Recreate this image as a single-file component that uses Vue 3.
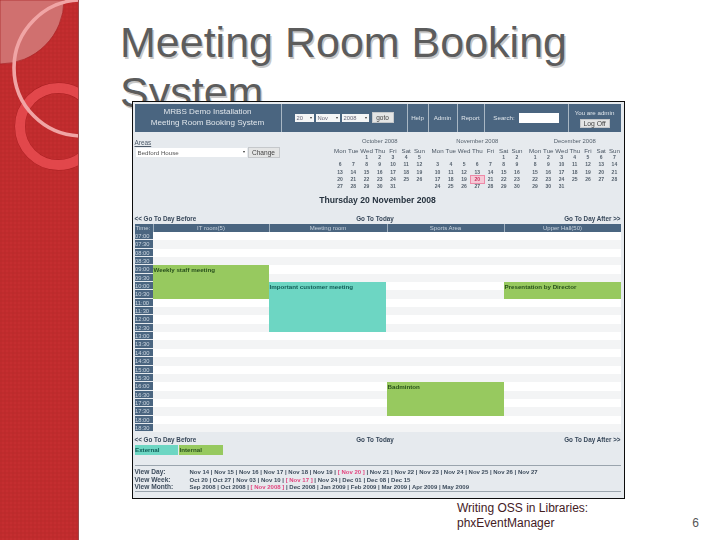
<script setup>
const months = [
  { name: 'October 2008', blank: 2, days: 31 },
  { name: 'November 2008', blank: 5, days: 30, today: 20 },
  { name: 'December 2008', blank: 0, days: 31 },
]
const dow = ['Mon', 'Tue', 'Wed', 'Thu', 'Fri', 'Sat', 'Sun']
function cells(m) {
  const out = []
  for (let i = 0; i < m.blank; i++) out.push('')
  for (let d = 1; d <= m.days; d++) out.push(d)
  return out
}
const rooms = ['IT room(5)', 'Meeting room', 'Sports Area', 'Upper Hall(50)']
const times = []
for (let h = 7; h <= 18; h++) {
  const hh = String(h).padStart(2, '0')
  times.push(hh + ':00', hh + ':30')
}
const viewRows = [
  { label: 'View Day:', items: ['Nov 14', 'Nov 15', 'Nov 16', 'Nov 17', 'Nov 18', 'Nov 19', '[ Nov 20 ]', 'Nov 21', 'Nov 22', 'Nov 23', 'Nov 24', 'Nov 25', 'Nov 26', 'Nov 27'] },
  { label: 'View Week:', items: ['Oct 20', 'Oct 27', 'Nov 03', 'Nov 10', '[ Nov 17 ]', 'Nov 24', 'Dec 01', 'Dec 08', 'Dec 15'] },
  { label: 'View Month:', items: ['Sep 2008', 'Oct 2008', '[ Nov 2008 ]', 'Dec 2008', 'Jan 2009', 'Feb 2009', 'Mar 2009', 'Apr 2009', 'May 2009'] },
]
</script>

<template>
  <div class="slide">
    <aside class="rail">
      <svg class="art" width="79" height="540" viewBox="0 0 79 540">
        <defs>
          <pattern id="weave" width="4" height="4" patternUnits="userSpaceOnUse">
            <rect width="4" height="4" fill="#c02b2d" />
            <rect width="2" height="2" fill="#bc2b2c" />
            <rect x="2" y="2" width="2" height="2" fill="#c42e30" />
          </pattern>
        </defs>
        <rect width="79" height="540" fill="url(#weave)" />
        <path d="M0 0H64A64 64 0 0 1 0 64Z" fill="#d0706f" stroke="#a81f22" stroke-width="0.7" />
        <circle cx="58.5" cy="126.5" r="38.5" fill="none" stroke="#a81f22" stroke-width="10.8" />
        <circle cx="58.5" cy="126.5" r="38.5" fill="none" stroke="#e2474b" stroke-width="10" />
        <circle cx="82" cy="68" r="68" fill="none" stroke="#f0a5a5" stroke-width="3.6" />
        <rect x="78" width="1" height="540" fill="#9c4a4c" />
      </svg>
    </aside>

    <main class="content">
      <h1 class="title">Meeting Room Booking System</h1>
      <footer class="foot">
        <p class="foot-text">Writing OSS in Libraries:<br />phxEventManager</p>
        <span class="page">6</span>
      </footer>
    </main>

    <section class="shot">
      <header class="bar">
        <div class="brand">MRBS Demo Installation<br />Meeting Room Booking System</div>
        <div class="cell dates">
          <span class="sel s1">20 <i></i></span>
          <span class="sel s2">Nov <i></i></span>
          <span class="sel s3">2008 <i></i></span>
          <span class="btn go">goto</span>
        </div>
        <div class="cell">Help</div>
        <div class="cell">Admin</div>
        <div class="cell">Report</div>
        <div class="cell search">Search: <span class="input"></span></div>
        <div class="cell user">
          <span>You are admin</span>
          <span class="btn logoff">Log Off</span>
        </div>
      </header>

      <div class="top">
        <div class="areas">
          <div class="areas-label">Areas</div>
          <div class="areas-row">
            <span class="area-select">Bedford House <i></i></span>
            <span class="btn change">Change</span>
          </div>
        </div>
        <div class="cals">
          <div v-for="m in months" :key="m.name" class="cal">
            <div class="cal-name">{{ m.name }}</div>
            <div class="cal-grid">
              <span v-for="d in dow" :key="d" class="dow">{{ d }}</span>
              <span
                v-for="(c, i) in cells(m)"
                :key="i"
                class="day"
                :class="{ today: c === m.today }"
              >{{ c }}</span>
            </div>
          </div>
        </div>
      </div>

      <h2 class="date">Thursday 20 November 2008</h2>

      <nav class="nav first">
        <span>&lt;&lt; Go To Day Before</span>
        <span>Go To Today</span>
        <span>Go To Day After &gt;&gt;</span>
      </nav>

      <div class="sched">
        <div class="hd hd-time">Time:</div>
        <div v-for="r in rooms" :key="r" class="hd">{{ r }}</div>
        <template v-for="(t, i) in times" :key="t">
          <div class="time" :class="'r' + i">{{ t }}</div>
          <div class="stripe" :class="['r' + i, i % 2 ? 'odd' : 'even']"></div>
        </template>
        <div class="ev internal weekly">Weekly staff meeting</div>
        <div class="ev external important">Important customer meeting</div>
        <div class="ev internal badminton">Badminton</div>
        <div class="ev internal presentation">Presentation by Director</div>
      </div>

      <nav class="nav second">
        <span>&lt;&lt; Go To Day Before</span>
        <span>Go To Today</span>
        <span>Go To Day After &gt;&gt;</span>
      </nav>

      <div class="legend">
        <span class="external">External</span>
        <span class="internal">Internal</span>
      </div>

      <div class="views">
        <div v-for="v in viewRows" :key="v.label" class="view">
          <span class="view-label">{{ v.label }}</span>
          <span class="view-items">
            <template v-for="(it, i) in v.items" :key="it">
              <span v-if="i"> | </span><span :class="{ cur: it[0] === '[' }">{{ it }}</span>
            </template>
          </span>
        </div>
      </div>
    </section>
  </div>
</template>

<style>
html, body { margin: 0; background: #fff; }
</style>

<style scoped>
.slide {
  position: relative;
  width: 720px;
  height: 540px;
  overflow: hidden;
  display: flex;
  background: #fff;
  font-family: "Liberation Sans", Arial, sans-serif;
}
.rail { width: 79px; flex: none; }
.art { display: block; }
.content {
  flex: 1;
  display: flex;
  flex-direction: column;
  justify-content: space-between;
  padding: 17px 20px 9px 41px;
}
.title {
  margin: 0;
  width: 480px;
  font-size: 43px;
  line-height: 50px;
  font-weight: 400;
  color: #5c5c5c;
  text-shadow: 1.5px 1.5px 0.5px #c8c8c8;
}
.foot { display: flex; justify-content: space-between; align-items: flex-end; padding-left: 337px; }
.foot-text { margin: 0; font-size: 12px; line-height: 15px; color: #44201f; }
.page { font-size: 12px; line-height: 15px; color: #555; margin-right: 1px; }

.shot {
  position: absolute;
  left: 132px;
  top: 100.5px;
  width: 492.5px;
  height: 398.5px;
  box-sizing: border-box;
  border: 1.5px solid #0c0c0c;
  padding: 2px 3px 0 1.5px;
  background: #e6eaee;
  color: #3a4756;
  font-size: 6px;
  filter: blur(0.35px);
}
.bar {
  height: 28px;
  display: grid;
  grid-template-columns: 146px 126px 21px 29px 27px 84px 1fr;
  background: #4a6580;
  color: #dfe5ea;
}
.brand {
  display: flex;
  align-items: center;
  justify-content: center;
  text-align: center;
  font-size: 8.1px;
  line-height: 10.5px;
}
.cell {
  display: flex;
  align-items: center;
  justify-content: center;
  border-left: 1px solid #a9b7c4;
  font-size: 6.2px;
}
.dates { gap: 2px; justify-content: flex-start; padding-left: 13px; }
.sel {
  height: 8px;
  display: flex;
  align-items: center;
  justify-content: space-between;
  box-sizing: border-box;
  padding: 0 2px;
  background: #f4f5f6;
  color: #667;
  font-size: 5.8px;
}
.sel i, .area-select i {
  width: 0;
  height: 0;
  border-left: 1.5px solid transparent;
  border-right: 1.5px solid transparent;
  border-top: 2px solid #333;
}
.s1 { width: 19px; }
.s2 { width: 24px; }
.s3 { width: 27px; }
.btn {
  display: flex;
  align-items: center;
  justify-content: center;
  background: #e4e5e5;
  border: 1px solid #c5c8cb;
  box-sizing: border-box;
  color: #444;
}
.go { width: 22px; height: 11px; font-size: 6.5px; margin-left: 1px; }
.search { gap: 4px; }
.input { width: 40px; height: 10px; background: #fff; }
.user { flex-direction: column; gap: 3px; font-size: 6.2px; padding-top: 1px; }
.logoff { width: 30px; height: 9px; font-size: 6.8px; }

.top { display: flex; height: 60px; }
.areas { width: 198px; flex: none; padding-top: 7px; }
.areas-label { text-decoration: underline; font-size: 6.4px; line-height: 7px; color: #4d5a68; }
.areas-row { display: flex; gap: 1px; margin-top: 2px; }
.area-select {
  width: 111px;
  height: 9.5px;
  margin-left: 1px;
  padding: 0 2px;
  box-sizing: border-box;
  background: #fff;
  display: flex;
  justify-content: space-between;
  align-items: center;
  font-size: 6.2px;
  color: #555;
}
.change { width: 32px; height: 11px; margin-top: -1px; font-size: 6.6px; }
.cals { display: flex; gap: 5px; margin-left: 1px; }
.cal { width: 92.5px; padding-top: 6.5px; text-align: center; }
.cal-name { font-size: 5.9px; line-height: 6px; color: #56626e; }
.cal-grid {
  display: grid;
  grid-template-columns: repeat(7, 1fr);
  grid-auto-rows: 7.2px;
  margin-top: 3px;
  align-items: center;
  color: #4a5663;
}
.dow { font-size: 6.2px; line-height: 9px; }
.day { font-size: 5px; line-height: 7.2px; font-weight: 700; color: #56626e; }
.today { background: #f5c9d6; outline: 0.6px solid #ee8aa8; color: #c8305f; }

.date {
  margin: 2px 0 0;
  height: 13px;
  text-align: center;
  font-size: 8.6px;
  line-height: 13px;
  font-weight: 700;
  color: #27333f;
}
.nav {
  display: grid;
  grid-template-columns: 200px 81px 205px;
  font-weight: 700;
  line-height: 7px;
  font-size: 6.3px;
  color: #38485a;
}
.nav span:nth-child(2) { text-align: center; }
.nav span:nth-child(3) { text-align: right; }
.first { margin-top: 8px; }
.second { margin-top: 3.5px; }

.sched {
  display: grid;
  grid-template-columns: 18px 116px 118px 117px 117px;
  grid-template-rows: 8px repeat(24, 8.35px);
  margin-top: 2.5px;
  width: 486px;
  background: #fff;
}
.hd {
  background: #4a6580;
  color: #c9d3dc;
  text-align: center;
  line-height: 8px;
  font-size: 6px;
  border-left: 0.6px solid #9fb0bf;
}
.hd-time { border-left: 0; text-align: left; padding-left: 1px; }
.time {
  grid-column: 1;
  background: #4a6580;
  color: #ccd6df;
  line-height: 8px;
  font-size: 5.8px;
  padding-left: 0.5px;
  border-bottom: 0.35px solid #e6eaee;
}
.stripe { grid-column: 2 / 6; }
.even { background: #fff; }
.odd { background: #f3f4f5; }
.r0 { grid-row: 2; } .r1 { grid-row: 3; } .r2 { grid-row: 4; } .r3 { grid-row: 5; }
.r4 { grid-row: 6; } .r5 { grid-row: 7; } .r6 { grid-row: 8; } .r7 { grid-row: 9; }
.r8 { grid-row: 10; } .r9 { grid-row: 11; } .r10 { grid-row: 12; } .r11 { grid-row: 13; }
.r12 { grid-row: 14; } .r13 { grid-row: 15; } .r14 { grid-row: 16; } .r15 { grid-row: 17; }
.r16 { grid-row: 18; } .r17 { grid-row: 19; } .r18 { grid-row: 20; } .r19 { grid-row: 21; }
.r20 { grid-row: 22; } .r21 { grid-row: 23; } .r22 { grid-row: 24; } .r23 { grid-row: 25; }
.ev {
  font-weight: 700;
  font-size: 6.2px;
  line-height: 7px;
  padding: 0.5px 0 0 1px;
  z-index: 1;
}
.internal { background: #97c95f; color: #28501c; }
.external { background: #6dd6c3; color: #0f5c56; }
.weekly { grid-column: 2; grid-row: 6 / 10; }
.important { grid-column: 3; grid-row: 8 / 14; margin: 0 1px 0 0; }
.badminton { grid-column: 4; grid-row: 20 / 24; }
.presentation { grid-column: 5; grid-row: 8 / 10; }

.legend { display: flex; gap: 1px; margin-top: 2.5px; height: 10px; }
.legend span {
  width: 43.5px;
  font-weight: 700;
  font-size: 6.2px;
  line-height: 9px;
  padding-left: 0.5px;
  box-sizing: border-box;
}
.views {
  margin-top: 10px;
  width: 486px;
  height: 27px;
  box-sizing: border-box;
  border-top: 0.7px solid #9aa4ad;
  border-bottom: 0.7px solid #9aa4ad;
  padding-top: 2px;
  font-weight: 700;
}
.view { display: flex; align-items: baseline; height: 7.4px; line-height: 7.4px; font-size: 6px; color: #3d4c5c; }
.view-label { width: 55px; flex: none; font-size: 6.6px; line-height: 7.4px; }
.view-items { white-space: pre; line-height: 7.4px; }
.cur { color: #e2457f; }
</style>
